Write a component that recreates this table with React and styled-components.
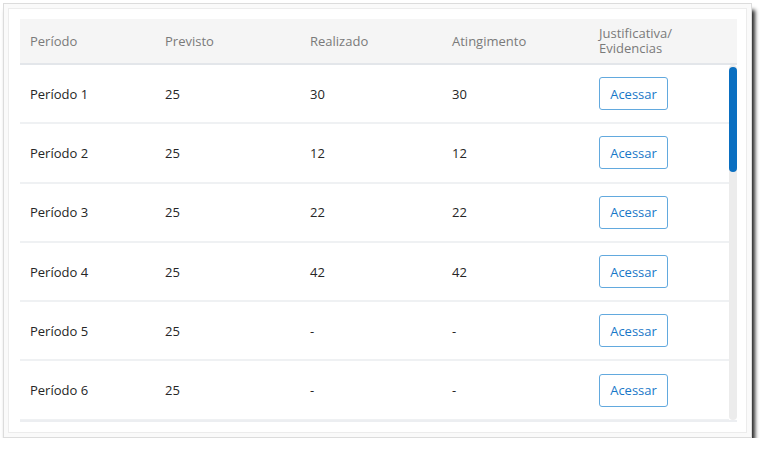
import React from "react";
import styled, { createGlobalStyle } from "styled-components";

const GlobalStyle = createGlobalStyle`
  html, body {
    margin: 0;
    padding: 0;
    background: #ffffff;
  }
  body {
    font-family: "Open Sans", "Noto Sans", sans-serif;
  }
`;

const Frame = styled.div`
  box-sizing: border-box;
  width: 749px;
  height: 435px;
  margin: 3px 0 0 3px;
  padding: 4px;
  border: 1px solid #dcdcdc;
  background: #fafafa;
  box-shadow: 3px 7px 4px rgba(0, 0, 0, 0.85);
`;

const Card = styled.div`
  box-sizing: border-box;
  height: 100%;
  padding: 10px 9px 0 11px;
  border: 1px solid #ececec;
  background: #ffffff;
`;

const Header = styled.div`
  display: grid;
  grid-template-columns: 135px 145px 142px 147px 1fr;
  height: 44px;
  align-items: center;
  background: #f5f5f5;
  border-bottom: 2px solid #e3e6ea;
`;

const HeadCell = styled.div`
  padding-left: 10px;
  font-size: 13px;
  line-height: 15px;
  color: #7a7a7a;
`;

const Body = styled.div`
  display: flex;
  height: 355px;
  border-bottom: 2px solid #eceef1;
`;

const RowList = styled.div`
  flex: 1;
  overflow: hidden;
`;

const Track = styled.div`
  width: 8px;
  padding-top: 2px;
  background: #ececec;
  border-radius: 4px;
`;

const Thumb = styled.div`
  height: 105px;
  background: #0a6fc1;
  border-radius: 4px;
`;

const Row = styled.div`
  display: grid;
  grid-template-columns: 135px 145px 142px 147px 1fr;
  height: 59.3px;
  box-sizing: border-box;
  align-items: center;
  border-bottom: 2px solid #eff1f3;
`;

const Cell = styled.div`
  padding-left: 10px;
  font-size: 13px;
  color: #262626;
`;

const AccessButton = styled.button`
  box-sizing: border-box;
  width: 69px;
  height: 33px;
  padding: 0;
  margin-left: 10px;
  border: 1px solid #62a9de;
  border-radius: 3px;
  background: #ffffff;
  color: #1878c8;
  font-family: inherit;
  font-size: 13px;
  cursor: pointer;
`;

const columns = ["Período", "Previsto", "Realizado", "Atingimento"];

const rows = [
  { periodo: "Período 1", previsto: 25, realizado: "30", atingimento: "30" },
  { periodo: "Período 2", previsto: 25, realizado: "12", atingimento: "12" },
  { periodo: "Período 3", previsto: 25, realizado: "22", atingimento: "22" },
  { periodo: "Período 4", previsto: 25, realizado: "42", atingimento: "42" },
  { periodo: "Período 5", previsto: 25, realizado: "-", atingimento: "-" },
  { periodo: "Período 6", previsto: 25, realizado: "-", atingimento: "-" }
];

export default function App() {
  return (
    <>
      <GlobalStyle />
      <Frame>
        <Card>
          <Header>
            {columns.map(col => (
              <HeadCell key={col}>{col}</HeadCell>
            ))}
            <HeadCell>
              Justificativa/
              <br />
              Evidencias
            </HeadCell>
          </Header>
          <Body>
            <RowList>
              {rows.map(row => (
                <Row key={row.periodo}>
                  <Cell>{row.periodo}</Cell>
                  <Cell>{row.previsto}</Cell>
                  <Cell>{row.realizado}</Cell>
                  <Cell>{row.atingimento}</Cell>
                  <div>
                    <AccessButton>Acessar</AccessButton>
                  </div>
                </Row>
              ))}
            </RowList>
            <Track>
              <Thumb />
            </Track>
          </Body>
        </Card>
      </Frame>
    </>
  );
}
